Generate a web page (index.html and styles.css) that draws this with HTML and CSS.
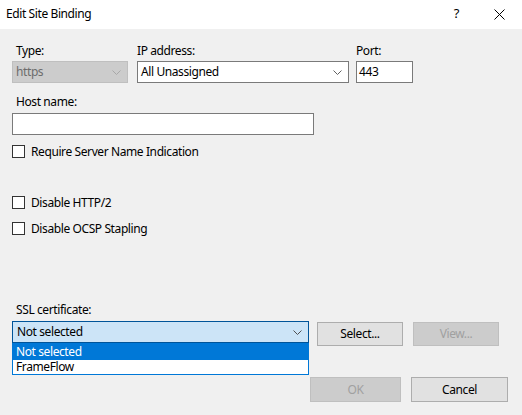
FILE: index.html
```html
<!DOCTYPE html>
<html>
<head>
<meta charset="utf-8">
<link rel="stylesheet" href="styles.css">
</head>
<body>
<div class="dialog">
  <div class="titlebar">
    <span class="title">Edit Site Binding</span>
    <span class="help">?</span>
    <span class="close"><svg width="11" height="11" viewBox="0 0 11 11"><path d="M0.5 0.5 L10.5 10.5 M10.5 0.5 L0.5 10.5" stroke="#000" stroke-width="1" fill="none"/></svg></span>
  </div>
  <div class="content">
    <div class="fields">
      <div class="field f-type">
        <div class="lbl indent">Type:</div>
        <div class="combo disabled"><span class="ctext">https</span><svg class="chev" width="9" height="5" viewBox="0 0 9 5"><polyline points="0.5,0.5 4.5,4.5 8.5,0.5" fill="none" stroke="#a8a8a8" stroke-width="1"/></svg></div>
      </div>
      <div class="field f-ip">
        <div class="lbl">IP address:</div>
        <div class="combo"><span class="ctext">All Unassigned</span><svg class="chev" width="9" height="5" viewBox="0 0 9 5"><polyline points="0.5,0.5 4.5,4.5 8.5,0.5" fill="none" stroke="#606060" stroke-width="1"/></svg></div>
      </div>
      <div class="field f-port">
        <div class="lbl">Port:</div>
        <div class="textbox port">443</div>
      </div>
    </div>

    <div class="lbl indent host-lbl">Host name:</div>
    <div class="textbox host"></div>

    <div class="check c-sni"><span class="box"></span><span>Require Server Name Indication</span></div>
    <div class="check c-http2"><span class="box"></span><span>Disable HTTP/2</span></div>
    <div class="check c-ocsp"><span class="box"></span><span>Disable OCSP Stapling</span></div>

    <div class="lbl indent ssl-lbl">SSL certificate:</div>
    <div class="ssl-row">
      <div class="ssl-wrap">
        <div class="combo focused"><span class="ctext">Not selected</span><svg class="chev" width="9" height="5" viewBox="0 0 9 5"><polyline points="0.5,0.5 4.5,4.5 8.5,0.5" fill="none" stroke="#505050" stroke-width="1"/></svg></div>
        <div class="dropdown">
          <div class="item selected">Not selected</div>
          <div class="item second">FrameFlow</div>
        </div>
      </div>
      <div class="btn btn-select">Select...</div>
      <div class="btn btn-view disabled">View...</div>
    </div>

    <div class="footer">
      <div class="btn btn-ok disabled">OK</div>
      <div class="btn btn-cancel">Cancel</div>
    </div>
  </div>
</div>
</body>
</html>
```
FILE: styles.css
```css
* { box-sizing: border-box; }
html, body { margin: 0; padding: 0; }
body {
  width: 522px;
  height: 415px;
  background: #f0f0f0;
  font-family: "Noto Sans", "Liberation Sans", sans-serif;
  font-size: 12px;
  letter-spacing: -0.4px;
  color: #000;
  overflow: hidden;
}
.dialog { width: 522px; height: 415px; }

.titlebar {
  height: 29px;
  background: #fff;
  display: flex;
  align-items: flex-start;
  padding: 6px 0 0 6px;
  line-height: 16px;
}
.title { flex: 1; }
.help { font-size: 13px; margin-right: 35px; margin-top: -1px; }
.close { width: 11px; height: 11px; margin-right: 17px; margin-top: 3px; display: block; }
.close svg { display: block; }

.content { padding: 14px 14px 0 12px; position: relative; }

.lbl { line-height: 16px; height: 16px; white-space: nowrap; }
.indent { padding-left: 4px; }

.fields { display: flex; }
.field .lbl { margin-bottom: 2px; }
.f-type { width: 116px; margin-right: 9px; }
.f-ip { width: 212px; margin-right: 7px; }
.f-port { width: 57px; }

.combo {
  height: 22px;
  border: 1px solid #7a7a7a;
  background: #fff;
  display: flex;
  align-items: center;
  padding: 0 6px 0 3px;
  line-height: 20px;
}
.combo .ctext { flex: 1; white-space: nowrap; }
.combo .chev { display: block; margin-top: 1px; }
.combo.disabled { background: #cccccc; border-color: #bfbfbf; color: #6d6d6d; }
.combo.focused { background: #cce4f7; border-color: #005499; padding-left: 4px; }

.textbox {
  height: 22px;
  border: 1px solid #7a7a7a;
  background: #fff;
  line-height: 20px;
  padding-left: 2px;
}
.host-lbl { margin-top: 11px; }
.host { width: 302px; margin-top: 3px; }

.check {
  display: flex;
  align-items: center;
  line-height: 15px;
  height: 15px;
  white-space: nowrap;
}
.check .box {
  width: 13px;
  height: 13px;
  border: 1px solid #333;
  background: #fff;
  margin-right: 6px;
  flex: none;
}
.c-sni { margin-top: 9px; }
.c-http2 { margin-top: 36px; }
.c-ocsp { margin-top: 11px; }

.ssl-lbl { margin-top: 66px; }
.ssl-row { display: flex; align-items: flex-start; margin-top: 3px; }
.ssl-wrap { width: 297px; margin-right: 8px; position: relative; }

.dropdown {
  position: absolute;
  left: 0;
  top: 22px;
  width: 297px;
  background: #fff;
  border: 1px solid #0078d7;
  border-top: none;
  z-index: 2;
}
.item { padding-left: 3px; white-space: nowrap; }
.item.selected { background: #0078d7; color: #fff; height: 17px; line-height: 17px; }
.item.second { height: 14px; line-height: 14px; }

.btn {
  border: 1px solid #adadad;
  background: #e1e1e1;
  display: flex;
  align-items: center;
  justify-content: center;
  line-height: 16px;
}
.btn.disabled { background: #cccccc; border-color: #bfbfbf; color: #a0a0a0; }
.btn-select, .btn-view { width: 86px; height: 24px; margin-top: 1px; }
.btn-select { margin-right: 10px; }

.footer { display: flex; justify-content: flex-end; margin-top: 31px; }
.btn-ok { width: 91px; height: 25px; margin-right: 10px; }
.btn-cancel { width: 97px; height: 25px; }
```
